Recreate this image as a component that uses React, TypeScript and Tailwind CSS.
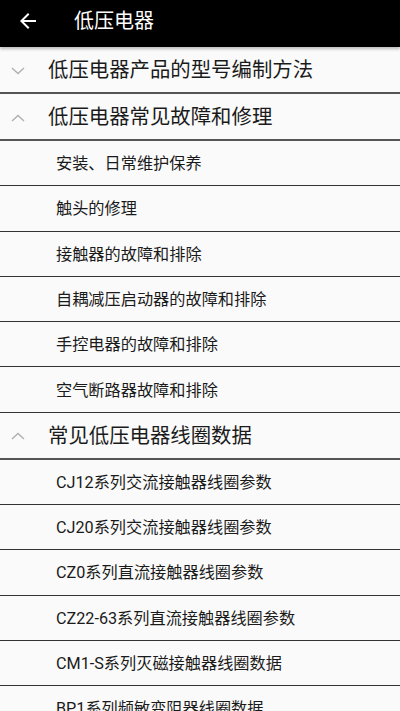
import React from 'react';

const FONT = { fontFamily: 'Roboto, "Noto Sans CJK SC", sans-serif' };

type Group = { title: string; open: boolean; items: string[] };

const GROUPS: Group[] = [
  { title: '低压电器产品的型号编制方法', open: false, items: [] },
  {
    title: '低压电器常见故障和修理',
    open: true,
    items: ['安装、日常维护保养', '触头的修理', '接触器的故障和排除', '自耦减压启动器的故障和排除', '手控电器的故障和排除', '空气断路器故障和排除'],
  },
  {
    title: '常见低压电器线圈数据',
    open: true,
    items: ['CJ12系列交流接触器线圈参数', 'CJ20系列交流接触器线圈参数', 'CZ0系列直流接触器线圈参数', 'CZ22-63系列直流接触器线圈参数', 'CM1-S系列灭磁接触器线圈数据', 'BP1系列频敏变阻器线圈数据'],
  },
];

const Chevron: React.FC<{ up: boolean }> = ({ up }) => (
  <svg width="14" height="8" viewBox="0 0 14 8" fill="none" stroke="#b0b0b0" strokeWidth="1.4">
    {up ? <polyline points="1,7 7,1.5 13,7" /> : <polyline points="1,1 7,6.5 13,1" />}
  </svg>
);

export default function App() {
  return (
    <div className="w-[400px] h-[711px] overflow-hidden bg-[#fafafa]" style={FONT}>
      {/* Toolbar */}
      <div className="h-[47px] bg-black flex items-center relative z-10 shadow-[0_2px_3px_rgba(0,0,0,0.25)]">
        <svg className="ml-[16px] -mt-[6px]" width="24" height="24" viewBox="0 0 24 24" fill="#fff">
          <path d="M20 11H7.83l5.59-5.59L12 4l-8 8 8 8 1.41-1.41L7.83 13H20v-2z" />
        </svg>
        <span className="ml-[34px] -mt-[6px] text-white text-[20px] leading-none">低压电器</span>
      </div>

      {GROUPS.map((g) => (
        <div key={g.title}>
          <div className="h-[47px] flex items-center border-b-2 border-[#555] box-border pt-[2px]">
            <div className="w-[48px] flex justify-center pr-[12px]">
              <Chevron up={g.open} />
            </div>
            <span className="text-[20.4px] text-[#1a1a1a] leading-none">{g.title}</span>
          </div>
          {g.open &&
            g.items.map((it) => (
              <div key={it} className="h-[45.3px] flex items-center pl-[56px] border-b border-[#333] box-border pt-[2px]">
                <span className="text-[16.2px] text-[#1a1a1a] leading-none">{it}</span>
              </div>
            ))}
        </div>
      ))}
    </div>
  );
}
